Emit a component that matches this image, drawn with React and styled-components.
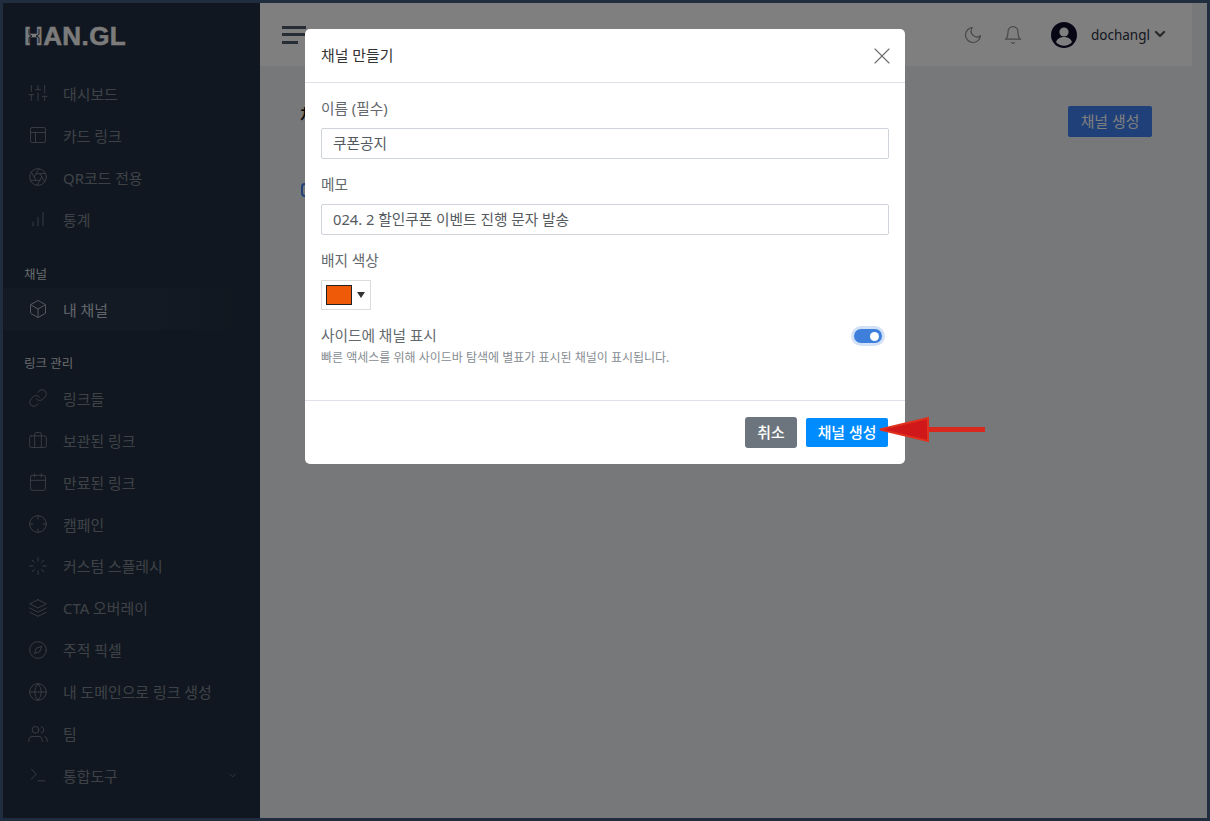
import React from "react";
import styled, { createGlobalStyle } from "styled-components";
import {
  FiSliders, FiLayout, FiAperture, FiBarChart, FiBox, FiLink, FiBriefcase, FiCalendar,
  FiCrosshair, FiLoader, FiLayers, FiCompass, FiGlobe, FiUsers, FiTerminal, FiChevronDown,
  FiMoon, FiBell, FiX,
} from "react-icons/fi";

const FONT = `"Noto Sans", "Noto Sans CJK KR", sans-serif`;

const Global = createGlobalStyle`
  html, body { margin: 0; padding: 0; height: 100%; overflow: hidden; }
  body { font-family: ${FONT}; background: #1f2d3f; }
  * { box-sizing: border-box; }
`;

const Frame = styled.div`
  position: relative;
  width: 1210px;
  height: 821px;
  border: 3px solid #1f2d3f;
  display: flex;
  overflow: hidden;
`;

const Sidebar = styled.aside`
  width: 257px;
  flex: none;
  background: #222f40;
  padding-top: 18px;
`;

const LogoRow = styled.div`
  height: 30px;
  padding-left: 21px;
  margin-bottom: 21.5px;
  display: flex;
  align-items: center;
`;

const Logo = styled.div`
  position: relative;
  font-family: "Liberation Sans", sans-serif;
  font-weight: 700;
  font-size: 26px;
  letter-spacing: 0.4px;
  color: #f6f6f6;
  line-height: 30px;
  -webkit-text-stroke: 0.5px #f6f6f6;
`;

const LogoCut = styled.svg`
  position: absolute;
  left: 0;
  top: 5px;
  width: 20px;
  height: 20px;
`;

const GroupLabel = styled.div`
  font-size: 12.5px;
  line-height: 16px;
  color: #cfd4da;
  padding-left: 21px;
  margin: ${(p) => p.$mt}px 0 5px;
`;

const Item = styled.div`
  height: 41.9px;
  display: flex;
  align-items: center;
  padding-left: 25px;
  padding-right: 22px;
  font-size: 14.9px;
  color: ${(p) => (p.$active ? "#c3cad4" : "#7d858f")};
  background: ${(p) =>
    p.$active ? "linear-gradient(90deg, #263448 0%, #263448 60%, #222f40 92%)" : "transparent"};
  svg.main { width: 20px; height: 20px; stroke-width: 1; flex: none; margin-right: 15px; }
`;

const ItemChevron = styled(FiChevronDown)`
  margin-left: auto;
  width: 11px;
  height: 11px;
  stroke-width: 1.5;
`;

const Main = styled.main`
  flex: 1;
  min-width: 0;
  background: #edf0f4;
  display: flex;
  flex-direction: column;
`;

const Header = styled.header`
  width: 932px;
  height: 63px;
  flex: none;
  background: #ffffff;
  display: flex;
  align-items: center;
  padding: 0 24px 0 22px;
`;

const Burger = styled.div`
  display: flex;
  flex-direction: column;
  gap: 4.5px;
  width: 24px;
  span { height: 3px; background: #4f5a68; display: block; }
  span:last-child { width: 16px; }
`;

const HeaderRight = styled.div`
  margin-left: auto;
  display: flex;
  align-items: center;
  color: #8a8e94;
  svg.tool { width: 20px; height: 20px; stroke-width: 1.4; }
`;

const Tool = styled.span`
  display: flex;
  margin-right: ${(p) => p.$mr}px;
`;

const Avatar = styled.svg`
  width: 26px;
  height: 26px;
  margin-right: 14px;
`;

const UserName = styled.span`
  font-size: 13.5px;
  color: #2b2f3e;
`;

const UserChevron = styled(FiChevronDown)`
  width: 16px;
  height: 16px;
  margin: -2px 0 0 2px;
  stroke-width: 3.4;
  color: #555;
`;

const Body = styled.div`
  width: 932px;
  padding: 40px 40px 0 40px;
`;

const TitleRow = styled.div`
  display: flex;
  align-items: flex-start;
  justify-content: space-between;
  height: 31px;
`;

const PageTitle = styled.h1`
  margin: 0;
  font-size: 18px;
  line-height: 18px;
  font-weight: 500;
  color: #111;
`;

const CreateBtn = styled.div`
  width: 84px;
  height: 31px;
  padding-bottom: 2px;
  border-radius: 2px;
  background: #3e80f0;
  color: #fff;
  font-size: 14.9px;
  display: flex;
  align-items: center;
  justify-content: center;
`;

const HiddenBadge = styled.div`
  margin: 46px 0 0 1px;
  width: 14px;
  height: 14px;
  border: 2px solid #3e80f0;
  border-radius: 4px;
`;

const Dim = styled.div`
  position: absolute;
  inset: 0;
  background: rgba(0, 0, 0, 0.5);
`;

const Modal = styled.div`
  position: absolute;
  left: 302px;
  top: 26px;
  width: 600px;
  height: 435px;
  background: #fff;
  border-radius: 5px;
  display: flex;
  flex-direction: column;
`;

const ModalHead = styled.div`
  height: 54px;
  flex: none;
  border-bottom: 1px solid #dee2e8;
  display: flex;
  align-items: center;
  justify-content: space-between;
  padding: 0 9px 3px 16px;
  font-size: 14.9px;
  color: #333;
`;

const CloseIcon = styled(FiX)`
  width: 28px;
  height: 28px;
  margin-top: 3px;
  stroke-width: 1;
  color: #6f6f6f;
`;

const ModalBody = styled.div`
  height: 318px;
  flex: none;
  padding: 15px 16px 0;
  border-bottom: 1px solid #dee2e8;
`;

const FieldLabel = styled.div`
  font-size: 14.7px;
  line-height: 20px;
  color: #63686d;
  margin-bottom: 10px;
`;

const Input = styled.input`
  display: block;
  width: 100%;
  height: 31px;
  border: 1px solid #ced4da;
  border-radius: 2px;
  padding: 0 11px 2px;
  font: 14.7px ${FONT};
  color: #555a5f;
  margin-bottom: 15px;
  background: #fff;
`;

const ColorPicker = styled.div`
  width: 50px;
  height: 30px;
  border: 1px solid #dcdcdc;
  display: flex;
  align-items: center;
  padding-left: 4px;
  margin-bottom: 15px;
`;

const Swatch = styled.div`
  width: 26px;
  height: 20px;
  background: #ee5a08;
  border: 1px solid #222;
`;

const Caret = styled.div`
  margin-left: 5px;
  width: 0;
  height: 0;
  border-left: 4px solid transparent;
  border-right: 4px solid transparent;
  border-top: 6px solid #333;
`;

const SwitchRow = styled.div`
  display: flex;
  justify-content: space-between;
  align-items: flex-start;
`;

const SwitchLabel = styled.div`
  font-size: 14.7px;
  line-height: 20px;
  color: #63686d;
`;

const Help = styled.div`
  font-size: 12px;
  line-height: 16px;
  color: #868c92;
  margin-top: 5px;
`;

const Switch = styled.div`
  width: 28px;
  height: 14px;
  border-radius: 7px;
  background: #3f7fdc;
  box-shadow: 0 0 0 3px #d3e1f7;
  margin: 4px 7px 0 0;
  display: flex;
  align-items: center;
  justify-content: flex-end;
  padding-right: 3px;
`;

const Knob = styled.div`
  width: 9px;
  height: 9px;
  border-radius: 50%;
  background: #fff;
`;

const ModalFoot = styled.div`
  flex: 1;
  display: flex;
  justify-content: flex-end;
  align-items: flex-start;
  padding: 16px 17px 0 0;
  gap: 9px;
`;

const CancelBtn = styled.div`
  width: 52px;
  height: 31px;
  padding-bottom: 3px;
  border-radius: 3px;
  background: #6c757d;
  color: #fff;
  font-size: 14.9px;
  font-weight: 500;
  display: flex;
  align-items: center;
  justify-content: center;
`;

const SubmitBtn = styled.div`
  width: 82px;
  height: 29px;
  padding-bottom: 2px;
  margin-top: 1px;
  border-radius: 2px;
  background: #008cff;
  color: #fff;
  font-size: 14.9px;
  font-weight: 500;
  display: flex;
  align-items: center;
  justify-content: center;
`;

const Arrow = styled.svg`
  position: absolute;
  left: 872px;
  top: 411px;
  width: 110px;
  height: 31px;
`;

const top = [
  [FiSliders, "대시보드"],
  [FiLayout, "카드 링크"],
  [FiAperture, "QR코드 전용"],
  [FiBarChart, "통계"],
];
const links = [
  [FiLink, "링크들"],
  [FiBriefcase, "보관된 링크"],
  [FiCalendar, "만료된 링크"],
  [FiCrosshair, "캠페인"],
  [FiLoader, "커스텀 스플레시"],
  [FiLayers, "CTA 오버레이"],
  [FiCompass, "주적 픽셀"],
  [FiGlobe, "내 도메인으로 링크 생성"],
  [FiUsers, "팀"],
];

export default function App() {
  return (
    <Frame>
      <Global />
      <Sidebar>
        <LogoRow>
          <Logo>
            HAN.GL
            <LogoCut viewBox="0 0 20 20">
              <path d="M5 3v5.500L8 10l-3 1.500V17M15 3v5.500L12 10l3 1.500V17" fill="none" stroke="#222f40" strokeWidth="1" />
            </LogoCut>
          </Logo>
        </LogoRow>
        {top.map(([I, t]) => (
          <Item key={t}><I className="main" />{t}</Item>
        ))}
        <GroupLabel $mt={27}>채널</GroupLabel>
        <Item $active><FiBox className="main" />내 채널</Item>
        <GroupLabel $mt={26.500}>링크 관리</GroupLabel>
        {links.map(([I, t]) => (
          <Item key={t}><I className="main" />{t}</Item>
        ))}
        <Item><FiTerminal className="main" />통합도구<ItemChevron /></Item>
      </Sidebar>
      <Main>
        <Header>
          <Burger><span /><span /><span /></Burger>
          <HeaderRight>
            <Tool $mr={20}><FiMoon className="tool" /></Tool>
            <Tool $mr={28}><FiBell className="tool" /></Tool>
            <Avatar viewBox="0 0 26 26">
              <circle cx="13" cy="13" r="13" fill="#0c0c2a" />
              <circle cx="13" cy="10" r="4.6" fill="#fff" />
              <path d="M5 20c1.500-4 5-5 8-5s6.500 1 8 5c-2 2.500-5 3.700-8 3.700S7 22.500 5 20z" fill="#fff" />
            </Avatar>
            <UserName>dochangl</UserName>
            <UserChevron />
          </HeaderRight>
        </Header>
        <Body>
          <TitleRow>
            <PageTitle>채널</PageTitle>
            <CreateBtn>채널 생성</CreateBtn>
          </TitleRow>
          <HiddenBadge />
        </Body>
      </Main>
      <Dim />
      <Modal>
        <ModalHead>채널 만들기<CloseIcon /></ModalHead>
        <ModalBody>
          <FieldLabel>이름 (필수)</FieldLabel>
          <Input readOnly value="쿠폰공지" />
          <FieldLabel>메모</FieldLabel>
          <Input readOnly value="024. 2 할인쿠폰 이벤트 진행 문자 발송" />
          <FieldLabel>배지 색상</FieldLabel>
          <ColorPicker><Swatch /><Caret /></ColorPicker>
          <SwitchRow>
            <div>
              <SwitchLabel>사이드에 채널 표시</SwitchLabel>
              <Help>빠른 액세스를 위해 사이드바 탐색에 별표가 표시된 채널이 표시됩니다.</Help>
            </div>
            <Switch><Knob /></Switch>
          </SwitchRow>
        </ModalBody>
        <ModalFoot>
          <CancelBtn>취소</CancelBtn>
          <SubmitBtn>채널 생성</SubmitBtn>
        </ModalFoot>
      </Modal>
      <Arrow viewBox="0 0 110 31">
        <path d="M53 13h59v5H53z" fill="#d9281e" />
        <path d="M5 15.500L53 4v23z" fill="#d0181a" stroke="#e0301e" strokeWidth="2" />
      </Arrow>
    </Frame>
  );
}
